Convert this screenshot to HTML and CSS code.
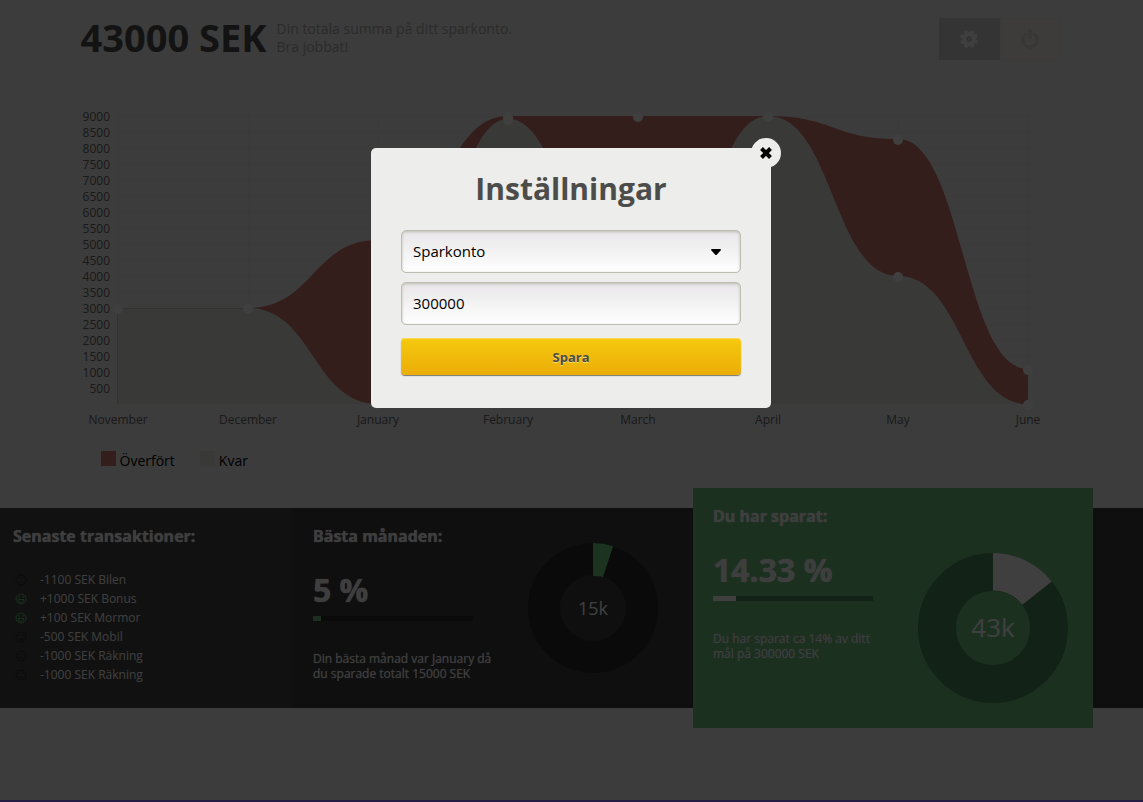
FILE: index.html
```html
<!DOCTYPE html>
<html lang="sv">
<head>
    <meta charset="UTF-8">
    <meta name="viewport" content="width=device-width, initial-scale=1.0">
    <title>Sparkonto</title>
    <link rel="stylesheet" href="styles.css">
</head>
<body>
    <div class="wrapper">
        <header class="top">
            <h1>43000 SEK</h1>
            <p class="intro">Din totala summa på ditt sparkonto.<br>Bra jobbat!</p>
            <nav class="tools">
                <button type="button" class="tool tool-settings" aria-label="Inställningar">
                    <svg width="20" height="20" viewBox="0 0 20 20">
                        <g fill="#fcfcfc">
                            <circle cx="10" cy="10" r="7"/>
                            <rect x="8" y="1" width="4" height="18" rx="1" transform="rotate(22 10 10)"/>
                            <rect x="8" y="1" width="4" height="18" rx="1" transform="rotate(67 10 10)"/>
                            <rect x="8" y="1" width="4" height="18" rx="1" transform="rotate(112 10 10)"/>
                            <rect x="8" y="1" width="4" height="18" rx="1" transform="rotate(157 10 10)"/>
                        </g>
                        <circle cx="10" cy="10" r="3" fill="#d0d0d0"/>
                    </svg>
                </button>
                <button type="button" class="tool tool-logout" aria-label="Logga ut">
                    <svg width="20" height="20" viewBox="0 0 20 20" fill="none" stroke="#dcdcdc" stroke-linecap="round">
                        <path d="M5.6 5.2a7.3 7.3 0 1 0 8.8 0" stroke-width="3.4"/>
                        <path d="M10 2v6.500" stroke-width="3.800"/>
                    </svg>
                </button>
            </nav>
        </header>

        <main class="chart">
            <svg class="graph" viewBox="1 0 980 330">
                <g class="grid" id="grid"></g>
                <path class="over" d="M37.500 208H168C233 208 233 140 298 140C363 140 363 16 428 16H688C753 16 753 39 818 39C883 39 883 269 948 269V304H37.500Z"/>
                <path class="left" d="M37.500 208H168C233 208 233 304 298 304C363 304 363 19 428 19C493 19 493 250 558 250C623 250 623 16 688 16C753 16 753 176 818 176C883 176 883 304 948 304H37.500Z"/>
                <path class="line" d="M37.500 304V208.500H168"/>
                <g class="dots" id="dots"></g>
                <g class="labels" id="labels"></g>
            </svg>
            <ul class="legend">
                <li><span class="box box-over"></span>Överfört</li>
                <li><span class="box box-left"></span>Kvar</li>
            </ul>
        </main>
    </div>

    <div class="panels">
        <section class="panel transactions">
            <h2>Senaste transaktioner:</h2>
            <ul id="transactions">
                <li class="minus">-1100 SEK Bilen</li>
                <li class="plus">+1000 SEK Bonus</li>
                <li class="plus">+100 SEK Mormor</li>
                <li class="minus">-500 SEK Mobil</li>
                <li class="minus">-1000 SEK Räkning</li>
                <li class="minus">-1000 SEK Räkning</li>
            </ul>
        </section>
        <section class="panel best">
            <div class="info">
                <h2>Bästa månaden:</h2>
                <p class="percent">5 %</p>
                <div class="bar"><div class="fill" style="width: 5%"></div></div>
                <p class="text">Din bästa månad var January då du sparade totalt 15000 SEK</p>
            </div>
            <svg class="donut" width="130" height="130" viewBox="0 0 130 130">
                <circle cx="65" cy="65" r="49" fill="none" stroke="#2a2a2a" stroke-width="32"/>
                <path d="M65 0A65 65 0 0 1 85.100 3.200L75 34A33 33 0 0 0 65 33Z" fill="#70cc80"/>
                <text x="65" y="72" font-size="18">15k</text>
            </svg>
        </section>
        <section class="panel saved">
            <div class="info">
                <h2>Du har sparat:</h2>
                <p class="percent">14.33 %</p>
                <div class="bar"><div class="fill" style="width: 14.33%"></div></div>
                <p class="text">Du har sparat ca 14% av ditt mål på 300000 SEK</p>
            </div>
            <svg class="donut" width="150" height="150" viewBox="0 0 150 150">
                <circle cx="75" cy="75" r="56" fill="none" stroke="#488858" stroke-width="38"/>
                <path d="M75 0A75 75 0 0 1 133.700 28.400L104.300 51.700A37.500 37.500 0 0 0 75 37.500Z" fill="#fcfcfc"/>
                <text x="75" y="84" font-size="26">43k</text>
            </svg>
        </section>
    </div>

    <div class="overlay">
        <form class="modal">
            <button type="button" class="close" aria-label="Stäng">
                <svg width="12" height="12" viewBox="0 0 12 12" stroke="#000" stroke-width="4">
                    <path d="M1.500 1.500l9 9M10.500 1.500l-9 9"/>
                </svg>
            </button>
            <h2>Inställningar</h2>
            <div class="select">
                <select aria-label="Konto">
                    <option>Sparkonto</option>
                </select>
                <svg class="arrow" width="10" height="6" viewBox="0 0 10 6"><path d="M1 0h8q1 0 1 1L6 5.500q-1 1-2 0L0 1q0-1 1-1z"/></svg>
            </div>
            <input type="text" value="300000" aria-label="Sparmål">
            <button type="submit" class="save">Spara</button>
        </form>
    </div>

    <script>
        const svgNS = 'http://www.w3.org/2000/svg';
        const months = ['November', 'December', 'January', 'February', 'March', 'April', 'May', 'June'];
        const points = [[0, 208], [1, 208], [2, 140], [2, 304], [3, 16], [3, 19], [4, 16], [5, 16], [6, 39], [6, 176], [7, 269], [7, 304]];

        function add(parent, name, attrs, text) {
            const el = document.createElementNS(svgNS, name);
            for (const key in attrs) el.setAttribute(key, attrs[key]);
            if (text) el.textContent = text;
            document.getElementById(parent).appendChild(el);
        }

        // y axis, one step for every 500 SEK
        for (let value = 500; value <= 9000; value += 500) {
            const y = 304 - value / 500 * 16;
            add('grid', 'path', { d: 'M35 ' + (y + 0.5) + 'H955' });
            add('labels', 'text', { x: 30, y: y + 5, 'text-anchor': 'end' }, String(value));
        }

        // x axis
        months.forEach((month, i) => {
            const x = 38 + i * 130;
            add('grid', 'path', { d: 'M' + (x + 0.5) + ' 14V306' });
            add('labels', 'text', { x: x, y: 324, 'text-anchor': 'middle' }, month);
        });

        points.forEach(([i, y]) => add('dots', 'circle', { cx: 38 + i * 130, cy: y + 1, r: 5 }));

        // smileys in front of the transactions
        document.querySelectorAll('#transactions li').forEach(li => {
            const mouth = li.className === 'plus' ? 'M3 6.500h6q-.5 3-3 3t-3-3z' : 'M3.500 9q2.500-3 5 0';
            li.insertAdjacentHTML('afterbegin',
                '<svg width="12" height="12" viewBox="0 0 12 12"><circle cx="6" cy="6" r="5"/>' +
                '<path d="M4 3v2M8 3v2' + mouth + '"/></svg>');
        });
    </script>
</body>
</html>
```
FILE: styles.css
```css
* {
    margin: 0;
    padding: 0;
    box-sizing: border-box;
}

body {
    font-family: "Open Sans", sans-serif;
    background-color: #ededed;
    color: #000;
    min-height: 100vh;
}

.wrapper {
    max-width: 982px;
    margin: 0 auto;
    padding-right: 2px;
}

/* Header */
.top {
    display: flex;
    align-items: flex-start;
    padding-top: 18px;
    height: 100px;
}

.top h1 {
    font-size: 38px;
    line-height: 38px;
    color: #4c4c4c;
}

.intro {
    margin: 2px 0 0 10px;
    font-size: 14px;
    font-weight: 500;
    line-height: 18px;
    color: #acacac;
}

.tools {
    display: flex;
    margin-left: auto;
}

.tool {
    display: flex;
    align-items: center;
    justify-content: center;
    width: 61px;
    height: 42px;
    border: none;
    cursor: pointer;
}

.tool-settings {
    background-color: #d0d0d0;
}

.tool-logout {
    background-color: #f2f0e6;
    border: 1px solid #e8e8e4;
}

/* Chart */
.graph {
    display: block;
    width: 100%;
}

.grid path {
    stroke: #e7e7e7;
}

.over {
    fill: #cc7870;
}

.left {
    fill: #e4e4dc;
}

.line {
    fill: none;
    stroke: #c8c8c0;
}

.dots circle {
    fill: #fcfcfc;
}

.labels text {
    font-size: 12px;
    fill: #686868;
}

.legend {
    display: flex;
    gap: 25px;
    padding: 21px 20px 0;
    list-style: none;
    font-size: 14px;
    line-height: 20px;
}

.legend li {
    display: flex;
}

.box {
    width: 15px;
    height: 15px;
    margin-right: 4px;
}

.box-over {
    background-color: #cc7870;
}

.box-left {
    background-color: #e4e4dc;
}

/* Panels */
.panels {
    display: flex;
    height: 200px;
    margin-top: 37px;
    background-color: #3c3c3c;
    color: #f8f8f8;
}

.panel {
    display: flex;
    justify-content: space-between;
    padding: 18px 20px;
}

.panel h2 {
    font-size: 16px;
    line-height: 20px;
    text-shadow: 0 0 1px #f8f8f8;
}

.transactions {
    display: block;
    width: 293px;
    padding-left: 13px;
    background-color: #444;
}

.transactions ul {
    margin-top: 24px;
    list-style: none;
}

.transactions li {
    display: flex;
    align-items: center;
    gap: 13px;
    padding-left: 2px;
    font-size: 12px;
    font-weight: 500;
    line-height: 19px;
}

.transactions svg {
    fill: none;
    stroke: #2c2c2c;
}

.transactions .plus svg {
    stroke: #60c070;
}

.best {
    width: 400px;
    padding-right: 35px;
}

.saved {
    width: 400px;
    height: 240px;
    margin-top: -20px;
    padding-right: 25px;
    background-color: #70c080;
}

.info {
    width: 180px;
}

.percent {
    margin-top: 22px;
    font-size: 32px;
    font-weight: bold;
    line-height: 44px;
    text-shadow: 0 0 1px #f8f8f8;
}

.bar {
    width: 160px;
    height: 5px;
    margin-top: 4px;
    background-color: #2a2a2a;
}

.fill {
    height: 5px;
    background-color: #70c080;
}

.saved .bar {
    background-color: #488858;
}

.saved .fill {
    background-color: #fcfcfc;
}

.text {
    margin-top: 30px;
    font-size: 12px;
    line-height: 15px;
    text-shadow: 0 0 1px #b0b0b0;
}

.donut {
    align-self: center;
}

.saved .donut {
    margin-top: 40px;
}

.donut text {
    fill: #fcfcfc;
    font-weight: 500;
    text-anchor: middle;
}

/* Settings dialog */
.overlay {
    position: fixed;
    top: 0;
    left: 0;
    right: 0;
    bottom: 0;
    padding: 148px 1px 0 0;
    background-color: rgba(0, 0, 0, 0.75);
    border-bottom: 2px solid #251c44;
}

.modal {
    position: relative;
    width: 400px;
    margin: 0 auto;
    padding: 20px 30px 33px;
    border-radius: 5px;
    background-color: #ededeb;
}

.modal h2 {
    margin-bottom: 20px;
    font-size: 30px;
    line-height: 42px;
    text-align: center;
    color: #4c4c4a;
}

.close {
    position: absolute;
    top: -10px;
    right: -10px;
    display: flex;
    align-items: center;
    justify-content: center;
    width: 30px;
    height: 30px;
    border: none;
    border-radius: 50%;
    background-color: #ededeb;
    cursor: pointer;
}

.select {
    position: relative;
}

.modal select,
.modal input {
    display: block;
    width: 100%;
    height: 43px;
    margin-bottom: 9px;
    padding: 0 10px 2px 11px;
    border: 1px solid #bdbdb2;
    border-radius: 5px;
    background: linear-gradient(#e8e6e8, #fff);
    box-shadow: inset 0 1px 3px #bdbdb2;
    font-family: "Open Sans", sans-serif;
    font-size: 15px;
    color: #000;
    appearance: none;
}

.arrow {
    position: absolute;
    top: 19px;
    right: 20px;
    pointer-events: none;
}

.save {
    display: block;
    width: 100%;
    height: 37px;
    margin-top: 13px;
    border: none;
    border-radius: 4px;
    background: linear-gradient(#f6c90e, #ebad08);
    box-shadow: 0 1px 1px #777, inset 0 1px 1px #fbdc5c;
    font-family: "Open Sans", sans-serif;
    font-size: 13px;
    font-weight: bold;
    color: #4c4c4a;
    text-shadow: 0 1px 0 #f9dd70;
    cursor: pointer;
}
```
